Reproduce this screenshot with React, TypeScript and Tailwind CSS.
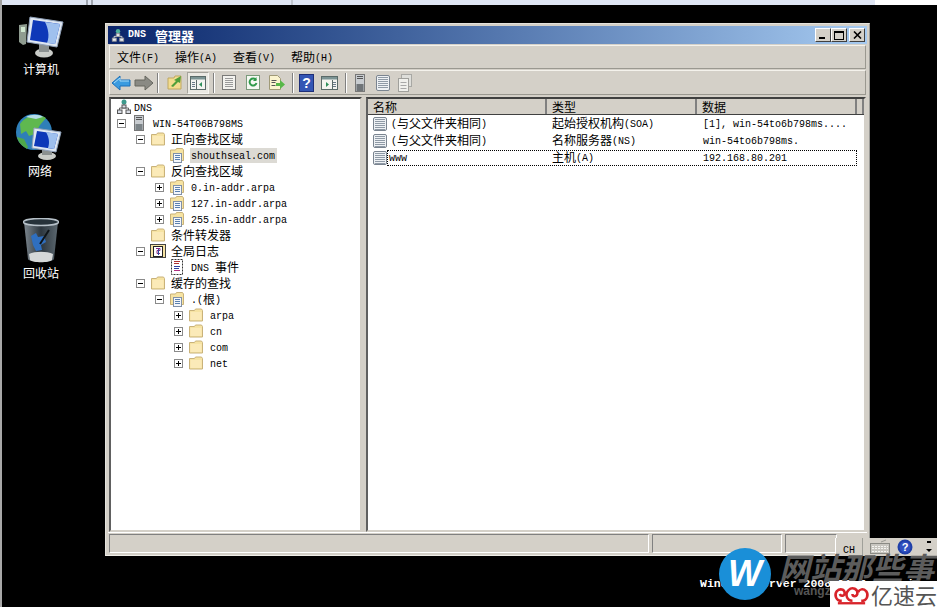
const Mix = ({ t, className = "" }: { t: string; className?: string }) => {
  const parts = t.split(/([\x00-\x7f]+)/).filter(Boolean);
  const mixed = parts.length > 1;
  return (
    <span className={"whitespace-pre leading-none " + className}>
      {parts.map((p, i) =>
        /^[\x00-\x7f]/.test(p) ? (
          <span
            key={i}
            className={"font-['Liberation_Mono',monospace] text-[10px] " + (mixed ? "align-[1px]" : "")}
          >
            {p}
          </span>
        ) : (
          <span key={i} className="font-['Noto_Sans_CJK_SC',sans-serif] text-[12px]">
            {p}
          </span>
        )
      )}
    </span>
  );
};

const Folder = () => (
  <svg width="16" height="16" viewBox="0 0 16 16">
    <path d="M1.5 3.5h5l1-1.5h6l1 1.5v10.5h-13z" fill="#f6e3a2" stroke="#c9b27a" />
    <rect x="2.5" y="5" width="11" height="8" fill="#fbeab8" />
  </svg>
);

const ZoneFolder = () => (
  <svg width="16" height="16" viewBox="0 0 16 16">
    <path d="M1.5 3h5l1-1.5h6l1 1.5v10.5h-13z" fill="#f6e3a2" stroke="#c9b27a" />
    <rect x="4.5" y="6.5" width="8" height="9" fill="#f4f7fb" stroke="#8090a8" />
    <path d="M6 8.5h5M6 10.5h5M6 12.5h5" stroke="#5a80b0" />
  </svg>
);

const DnsIcon = () => (
  <svg width="16" height="16" viewBox="0 0 16 16">
    <circle cx="8" cy="3" r="2.5" fill="#3f9a8c" />
    <path d="M8 5v4M3.5 11V9h9v2" stroke="#666" fill="none" />
    <rect x="1.5" y="11" width="4.5" height="3.5" fill="#d8dce4" stroke="#555" />
    <rect x="10" y="11" width="4.5" height="3.5" fill="#d8dce4" stroke="#555" />
    <rect x="6" y="6" width="4" height="3" fill="#d8dce4" stroke="#555" />
  </svg>
);

const ServerIcon = () => (
  <svg width="16" height="16" viewBox="0 0 16 16">
    <rect x="3.5" y="0.5" width="9" height="15" fill="#c8ccd0" stroke="#777" />
    <rect x="4.5" y="9" width="7" height="6" fill="#7c8488" />
    <path d="M5 2.5h6M5 4.5h6" stroke="#555" />
  </svg>
);

const LogFolder = () => (
  <svg width="16" height="16" viewBox="0 0 16 16">
    <rect x="0.5" y="1.5" width="15" height="13" fill="#f6e3a2" stroke="#444" />
    <rect x="3.5" y="3.5" width="9" height="10" fill="#fff" stroke="#222" />
    <path d="M6 5.5h4v2h-3v3h3" fill="none" stroke="#8a2a80" />
    <path d="M8.5 6v6" stroke="#2a50a0" />
  </svg>
);

const LogIcon = () => (
  <svg width="16" height="16" viewBox="0 0 16 16">
    <rect x="2.5" y="0.5" width="11" height="15" fill="#fff" stroke="#333" strokeDasharray="2 1" />
    <path d="M5 2.5h6M5 4.5h5" stroke="#b03030" />
    <path d="M5 7.5h6M5 9.5h5" stroke="#3040a0" />
    <path d="M5 11.5h6" stroke="#b03080" />
  </svg>
);

const RecordIcon = () => (
  <svg width="16" height="16" viewBox="0 0 16 16" className="shrink-0">
    <rect x="1.5" y="1.5" width="13" height="13" rx="1.5" fill="#eef1f4" stroke="#7a8490" />
    <path d="M3 3.5h10M3 5.5h10M3 7.5h10M3 9.5h10M3 11.5h10M3 13.5h10" stroke="#8f9aa6" />
  </svg>
);

const Expander = ({ open }: { open: boolean }) => (
  <svg width="9" height="9" viewBox="0 0 9 9">
    <rect x="0.5" y="0.5" width="8" height="8" fill="#fff" stroke="#8a8a8a" />
    <path d={open ? "M2 4.5h5" : "M2 4.5h5M4.5 2v5"} stroke="#000" />
  </svg>
);

type Node = {
  label: string;
  level: number;
  icon: React.ReactNode;
  exp?: "open" | "closed";
  selected?: boolean;
};

const indents = ["pl-[5px]", "pl-[6px]", "pl-[25px]", "pl-[44px]", "pl-[63px]"];
const textGaps = ["ml-[1px]", "ml-[5px]", "ml-[4px]", "ml-[5px]", "ml-[5px]"];

const tree: Node[] = [
  { label: "DNS", level: 0, icon: <DnsIcon /> },
  { label: "WIN-54T06B798MS", level: 1, icon: <ServerIcon />, exp: "open" },
  { label: "正向查找区域", level: 2, icon: <Folder />, exp: "open" },
  { label: "shouthseal.com", level: 3, icon: <ZoneFolder />, selected: true },
  { label: "反向查找区域", level: 2, icon: <Folder />, exp: "open" },
  { label: "0.in-addr.arpa", level: 3, icon: <ZoneFolder />, exp: "closed" },
  { label: "127.in-addr.arpa", level: 3, icon: <ZoneFolder />, exp: "closed" },
  { label: "255.in-addr.arpa", level: 3, icon: <ZoneFolder />, exp: "closed" },
  { label: "条件转发器", level: 2, icon: <Folder /> },
  { label: "全局日志", level: 2, icon: <LogFolder />, exp: "open" },
  { label: "DNS 事件", level: 3, icon: <LogIcon /> },
  { label: "缓存的查找", level: 2, icon: <Folder />, exp: "open" },
  { label: ".(根)", level: 3, icon: <ZoneFolder />, exp: "open" },
  { label: "arpa", level: 4, icon: <Folder />, exp: "closed" },
  { label: "cn", level: 4, icon: <Folder />, exp: "closed" },
  { label: "com", level: 4, icon: <Folder />, exp: "closed" },
  { label: "net", level: 4, icon: <Folder />, exp: "closed" },
];

const records = [
  ["(与父文件夹相同)", "起始授权机构(SOA)", "[1], win-54to6b798ms...."],
  ["(与父文件夹相同)", "名称服务器(NS)", "win-54to6b798ms."],
  ["www", "主机(A)", "192.168.80.201"],
];

const Sep = ({ className }: { className: string }) => (
  <div className={"w-[2px] h-[20px] border-l border-r border-l-[#808080] border-r-white " + className} />
);

const Toolbar = () => (
  <div className="h-[25px] mt-[1px] mx-[1px] shrink-0 flex items-center border border-[#f4f2ec] border-b-[#9a9890] border-r-[#9a9890] pl-[1px]">
    <svg width="20" height="18" viewBox="0 0 20 18">
      <path d="M1 9l8-7v4h10v6H9v4z" fill="#3a9be0" stroke="#1c6fb8" />
      <path d="M3 9l6-5v3h9" fill="none" stroke="#a8ddf8" />
    </svg>
    <svg width="20" height="18" viewBox="0 0 20 18" className="ml-[3px]">
      <path d="M19 9l-8-7v4H1v6h10v4z" fill="#8a8a84" stroke="#66665f" />
    </svg>
    <Sep className="ml-[3px]" />
    <svg width="17" height="17" viewBox="0 0 17 17" className="ml-[8px]">
      <path d="M1 4h6l1-2h6v13H1z" fill="#f3dc8e" stroke="#c0a860" />
      <path d="M4 12l5-5-2-1 7-4-1 7-2-1-5 5z" fill="#4f9f3a" />
    </svg>
    <div className="ml-[3px] w-[22px] h-[22px] bg-[#ebe9e3] border border-[#f7f6f2] border-l-[#a5a39c] border-t-[#a5a39c] flex items-center justify-center">
      <svg width="18" height="16" viewBox="0 0 18 16">
        <rect x="1.5" y="1.5" width="15" height="13" fill="#f4f4f0" stroke="#5a6a68" />
        <rect x="2" y="2" width="14" height="2.5" fill="#7c9494" />
        <path d="M7.5 5v9" stroke="#5a6a68" />
        <path d="M3 7.5h3M3 9.5h3M3 11.5h3" stroke="#6a7a88" />
        <path d="M13 7l-3 2.5 3 2.5z" fill="#2f8f5a" />
      </svg>
    </div>
    <Sep className="ml-[4px]" />
    <svg width="16" height="17" viewBox="0 0 16 17" className="ml-[6px]">
      <rect x="1.5" y="1.5" width="13" height="14" fill="#f3f2ee" stroke="#7a7a78" />
      <path d="M4 4.5h8M4 6.5h8M4 8.5h8M4 10.5h8M4 12.5h8" stroke="#9a9a9a" />
    </svg>
    <svg width="16" height="17" viewBox="0 0 16 17" className="ml-[8px]">
      <rect x="1.5" y="1.5" width="13" height="14" fill="#f5f8f2" stroke="#7a9a7a" />
      <path d="M11 6a3.5 3.5 0 1 0 .5 3" fill="none" stroke="#2f9a4a" strokeWidth="2" />
      <path d="M11.5 3v4h-3.5" fill="#2f9a4a" />
    </svg>
    <svg width="17" height="17" viewBox="0 0 17 17" className="ml-[7px]">
      <path d="M1.5 1.5h8l3 3v11h-11z" fill="#fbf4cf" stroke="#a09a78" />
      <path d="M3.5 6.5h5M3.5 8.5h4M3.5 11.5h4" stroke="#555" />
      <path d="M8 9h4V6l5 4.5-5 4.5v-3H8z" fill="#58b848" />
    </svg>
    <Sep className="ml-[7px]" />
    <svg width="15" height="18" viewBox="0 0 15 18" className="ml-[5px]">
      <rect x="0.5" y="0.5" width="14" height="17" fill="#3456b4" stroke="#1f2f78" />
      <text x="7.5" y="14" textAnchor="middle" fontSize="14" fontWeight="700" fill="#fff" fontFamily="Liberation Sans">?</text>
    </svg>
    <svg width="17" height="16" viewBox="0 0 17 16" className="ml-[7px]">
      <rect x="0.5" y="1.5" width="16" height="13" fill="#f4f4f0" stroke="#5a6a68" />
      <rect x="1" y="2" width="15" height="2.5" fill="#7c9494" />
      <path d="M11.5 5v9" stroke="#5a6a68" />
      <path d="M12 7.5h3M12 9.5h3M12 11.5h3" stroke="#6a7a88" />
      <path d="M5 7l3 2.5-3 2.5z" fill="#2f8f5a" />
    </svg>
    <Sep className="ml-[7px]" />
    <svg width="12" height="18" viewBox="0 0 12 18" className="ml-[7px]">
      <rect x="1.5" y="0.5" width="9" height="17" fill="#c8ccd0" stroke="#777" />
      <rect x="2.5" y="10" width="7" height="7" fill="#6f7478" />
      <path d="M3 2.5h6M3 4.5h6" stroke="#555" />
    </svg>
    <svg width="16" height="18" viewBox="0 0 16 18" className="ml-[9px]">
      <rect x="1.5" y="1.5" width="13" height="15" rx="1.5" fill="#eef1f4" stroke="#7a8490" />
      <path d="M3 3.5h10M3 5.5h10M3 7.5h10M3 9.5h10M3 11.5h10M3 13.5h10" stroke="#8f9aa6" />
    </svg>
    <svg width="16" height="18" viewBox="0 0 16 18" className="ml-[6px]">
      <rect x="4.5" y="0.5" width="10" height="12" fill="#dededa" stroke="#a8a8a4" />
      <rect x="1.5" y="4.5" width="10" height="13" fill="#f0f0ec" stroke="#a0a09c" />
      <path d="M3.5 8.5h6M3.5 11.5h6M3.5 14.5h6" stroke="#a8a8a8" />
    </svg>
  </div>
);

const ComputerArt = () => (
  <svg width="46" height="44" viewBox="0 0 46 44">
    <path d="M1 10l8-1-1 20-3 1-4-3z" fill="#8f9c90" />
    <rect x="3" y="12" width="4" height="5" fill="#d0e8d0" />
    <ellipse cx="26" cy="38" rx="9" ry="4.5" fill="#c9ccc8" />
    <path d="M21 29h10v8H21z" fill="#8a9090" />
    <path d="M12 2l33 5-6 25-30-5z" fill="#dfe7f2" stroke="#8fa0b8" />
    <path d="M15 5l27 4-5 20-25-4z" fill="#0e38b8" />
    <path d="M27 7l15 2-5 20-8-1c3-7 1-15-2-21z" fill="#9fc0ee" />
  </svg>
);

const NetworkArt = () => (
  <svg width="48" height="48" viewBox="0 0 48 48">
    <circle cx="18" cy="19" r="18" fill="#2f7fb8" />
    <path d="M4 11C10 2 22 0 30 5l-6 7-5 9-6 2-3-5-5 3z" fill="#5fb84f" />
    <path d="M1 24l7 2 4 8-1 2C6 33 2 29 1 24z" fill="#4fa84a" />
    <path d="M10 4c5-3 13-3 17 0l-7 2z" fill="#b5dce8" />
    <ellipse cx="31" cy="43" rx="9" ry="4" fill="#c9ccc8" />
    <path d="M26 34h10v8H26z" fill="#8a9090" />
    <path d="M18 15l27 4-5 20-24-4z" fill="#dfe7f2" stroke="#8fa0b8" />
    <path d="M21 18l21 3-4 15-20-3z" fill="#0e38b8" />
    <path d="M30 19l12 2-4 15-6-1c2-5 1-11-2-16z" fill="#9fc0ee" />
  </svg>
);

const BinArt = () => (
  <svg width="36" height="46" viewBox="0 0 36 46">
    <defs>
      <linearGradient id="bin" x1="0" x2="1" y1="0" y2="0">
        <stop offset="0" stopColor="#7c868e" />
        <stop offset="0.5" stopColor="#2c363e" />
        <stop offset="1" stopColor="#5c6870" />
      </linearGradient>
    </defs>
    <path d="M1 4l4 37c1 4 25 4 26 0l4-37z" fill="url(#bin)" />
    <ellipse cx="18" cy="4" rx="17.5" ry="3.5" fill="#26323a" stroke="#b6c0c8" strokeWidth="1.5" />
    <path d="M6 36c6-3 18-3 24 0l-1 6c-3 3-19 3-22 0z" fill="#d5d8d8" />
    <path d="M8 18l5-3 2 4 6-1 2 6-5 3 1 5-6 1-3-6z" fill="#2f6fc0" />
    <path d="M26 12l-9 14" stroke="#0e1418" strokeWidth="2" />
  </svg>
);

const DesktopIcon = ({ label, className, children }: { label: string; className: string; children: React.ReactNode }) => (
  <div className={"absolute flex flex-col items-center w-[60px] " + className}>
    {children}
    <span className="font-['Noto_Sans_CJK_SC',sans-serif] text-[12px] leading-none text-white">{label}</span>
  </div>
);

const WinButton = ({ children }: { children: React.ReactNode }) => (
  <div className="w-[16px] h-[14px] bg-[#d4d0c8] border border-white border-r-[#404040] border-b-[#404040] flex items-center justify-center">
    {children}
  </div>
);

const Panel = ({ className }: { className: string }) => (
  <div className={"h-[19px] border border-[#808080] border-r-white border-b-white " + className} />
);

export default function App() {
  return (
    <div className="relative w-[937px] h-[607px] bg-black overflow-hidden text-[12px] leading-none">
      {/* leftovers of the window behind */}
      <div className="h-[5px] flex">
        <div className="w-[875px] bg-[#dfe6f4] flex">
          <div className="w-[2px] bg-[#a0a0a0]" />
          <div className="ml-[84px] w-[2px] bg-[#a0a6b0]" />
          <div className="ml-[3px] w-[2px] bg-[#a0a6b0]" />
          <div className="ml-[198px] w-[2px] bg-[#c0c6d0]" />
        </div>
        <div className="flex-1 bg-white" />
      </div>
      <div className="absolute left-0 top-[5px] bottom-0 w-[2px] bg-[#a8a8a8]" />

      <DesktopIcon label="计算机" className="left-[11px] top-[15px] gap-[4px]">
        <ComputerArt />
      </DesktopIcon>
      <DesktopIcon label="网络" className="left-[10px] top-[113px] gap-[4px]">
        <NetworkArt />
      </DesktopIcon>
      <DesktopIcon label="回收站" className="left-[11px] top-[218px] gap-[3px]">
        <BinArt />
      </DesktopIcon>

      {/* DNS manager window */}
      <div className="absolute left-[105px] top-[23px] w-[765px] h-[533px] bg-[#d4d0c8] border border-[#e4e2dc] border-r-[#9a9a96] border-b-[#f0eee8] p-[2px] flex flex-col">
        <div className="h-[18px] shrink-0 flex items-center bg-gradient-to-r from-[#0a246a] to-[#a6caf0] pl-[3px] pr-[2px]">
          <svg width="14" height="15" viewBox="0 0 16 16">
            <circle cx="8" cy="3" r="2.5" fill="#4fb09c" />
            <path d="M8 5v4M3.5 11V9h9v2" stroke="#ddd" fill="none" />
            <rect x="1.5" y="11" width="4.5" height="3.5" fill="#e8ecf4" stroke="#999" />
            <rect x="10" y="11" width="4.5" height="3.5" fill="#e8ecf4" stroke="#999" />
            <rect x="6" y="6" width="4" height="3" fill="#e8ecf4" stroke="#999" />
          </svg>
          <span className="ml-[3px] text-white font-bold font-['Liberation_Mono',monospace] text-[10px]">DNS</span>
          <span className="ml-[9px] text-white font-bold font-['Noto_Sans_CJK_SC',sans-serif] text-[13px]">管理器</span>
          <div className="ml-auto flex">
            <WinButton>
              <div className="w-[6px] h-[2px] bg-black mt-[6px] -ml-[2px]" />
            </WinButton>
            <WinButton>
              <div className="w-[10px] h-[9px] border border-black border-t-2" />
            </WinButton>
            <div className="ml-[2px]">
              <WinButton>
                <svg width="9" height="8" viewBox="0 0 9 8">
                  <path d="M1 0.5l7 7M8 0.5l-7 7" stroke="#000" strokeWidth="1.6" />
                </svg>
              </WinButton>
            </div>
          </div>
        </div>

        <div className="h-[24px] mt-[1px] mx-[1px] shrink-0 flex items-center gap-[16px] pl-[7px] border border-[#f4f2ec] border-b-[#9a9890] border-r-[#9a9890]">
          <Mix t="文件(F)" />
          <Mix t="操作(A)" />
          <Mix t="查看(V)" />
          <Mix t="帮助(H)" />
        </div>

        <Toolbar />

        <div className="flex-1 min-h-0 mt-[2px] flex gap-[4px] px-[1px]">
          <div className="w-[253px] bg-white border-2 border-[#404040] border-r-[#d4d0c8] border-b-[#d4d0c8] border-l-[#606060]">
            {tree.map((n) => (
              <div key={n.label} className={"h-4 flex items-center text-black " + indents[n.level]}>
                {n.level > 0 && (
                  <div className="w-[14px] shrink-0 flex">{n.exp && <Expander open={n.exp === "open"} />}</div>
                )}
                {n.icon}
                <div
                  className={
                    "h-[15px] flex items-center px-[1px] " +
                    textGaps[n.level] +
                    (n.selected ? " bg-[#dcdad4] pr-[2px]" : "")
                  }
                >
                  <Mix t={n.label} />
                </div>
              </div>
            ))}
          </div>

          <div className="flex-1 bg-white border-2 border-[#404040] border-r-[#d4d0c8] border-b-[#d4d0c8] border-l-[#606060]">
            <div className="h-[16px] grid grid-cols-[179px_150px_160px_1fr] bg-[#d4d0c8] border-b border-b-[#404040]">
              {["名称", "类型", "数据", ""].map((h, i) => (
                <div key={i} className="flex items-center pl-[5px] pt-[1px] border-r-2 border-r-[#808080]">
                  <Mix t={h} />
                </div>
              ))}
            </div>
            {records.map((r, i) => (
              <div key={i} className="relative h-[17px] grid grid-cols-[179px_150px_160px_1fr] items-center text-black">
                <div className="flex items-center pl-[4px]">
                  <RecordIcon />
                  <Mix t={r[0]} className={i === 2 ? "ml-[1px]" : "ml-[3px]"} />
                </div>
                <div className="pl-[5px]">
                  <Mix t={r[1]} />
                </div>
                <div className="pl-[6px]">
                  <Mix t={r[2]} />
                </div>
                {i === 2 && (
                  <div className="absolute left-[19px] right-[7px] top-[1px] bottom-0 border border-dotted border-black" />
                )}
              </div>
            ))}
          </div>
        </div>

        <div className="h-[21px] shrink-0 flex items-end gap-[3px] px-[1px] border-t border-t-white">
          <Panel className="w-[540px]" />
          <Panel className="w-[130px]" />
          <Panel className="w-[52px]" />
        </div>
      </div>

      {/* language bar */}
      <div className="absolute left-[835px] top-[538px] w-[102px] h-[18px] bg-[#d4d0c8] flex items-center border-l border-l-white">
        <div className="w-[27px] h-full flex items-end justify-center border-r border-r-[#a0a09a]">
          <span className="font-['Liberation_Mono',monospace] text-[10px] leading-none text-black">CH</span>
        </div>
        <svg width="22" height="16" viewBox="0 0 22 16" className="ml-[6px]">
          <path d="M12 3l5-2" stroke="#9a9a94" />
          <rect x="1.5" y="4.5" width="19" height="10" fill="#c8c6c0" stroke="#8a8a84" />
          <path d="M3 7.5h16M3 9.5h16M3 12.5h16" stroke="#f4f4f0" strokeDasharray="2 1" />
        </svg>
        <svg width="16" height="16" viewBox="0 0 16 16" className="ml-[6px]">
          <circle cx="8" cy="8" r="7.5" fill="#1f3fa8" />
          <circle cx="8" cy="8" r="5.5" fill="#3050c0" />
          <text x="8" y="12" textAnchor="middle" fontSize="11" fontWeight="700" fill="#fff" fontFamily="Liberation Sans">?</text>
        </svg>
        <svg width="8" height="14" viewBox="0 0 8 14" className="ml-[12px]">
          <path d="M2 2h4" stroke="#000" strokeWidth="2" />
          <path d="M1 9h6l-3 3z" fill="#000" />
        </svg>
      </div>

      {/* os edition text under the watermark */}
      <div className="absolute left-[700px] top-[578px] font-['Liberation_Mono',monospace] text-[11.5px] font-bold text-white whitespace-pre">
        Windows Server 2008 R2 Enterprise
      </div>
      <div className="absolute left-[794px] top-[585px] font-['Liberation_Sans',sans-serif] text-[12px] font-bold text-[#555]">
        wangzhan.com
      </div>

      {/* site watermark */}
      <div className="absolute left-[719px] top-[548px] w-[52px] h-[52px] rounded-full bg-[#1a8fd8] flex items-center justify-center">
        <span className="font-['Liberation_Sans',sans-serif] text-[36px] leading-none font-bold italic text-white">W</span>
      </div>
      <div className="absolute left-[779px] top-[549px] font-['Noto_Sans_CJK_SC',sans-serif] text-[31px] leading-[36px] font-bold italic text-[#5c5c5c] whitespace-pre">
        网站那些事
      </div>
      <div className="absolute left-[830px] top-[581px] w-[107px] h-[26px] bg-white flex items-center pl-[3px]">
        <svg width="38" height="24" viewBox="0 0 38 24">
          <path
            d="M9 19C3 19 1 13 4 9c3-3 8-2 8 2 0 3-4 4-5 1M20 19c-6 0-8-7-4-11 4-4 10-1 9 4-1 3-5 3-5 0M29 19c6 0 8-6 5-10-3-3-7-2-8 1"
            fill="none"
            stroke="#d8232a"
            strokeWidth="2.6"
          />
          <path d="M5 21.5h28" stroke="#d8232a" strokeWidth="2.4" />
        </svg>
        <span className="ml-[1px] font-['Noto_Sans_CJK_SC',sans-serif] text-[22px] leading-none text-[#555] whitespace-pre">亿速云</span>
      </div>
    </div>
  );
}
